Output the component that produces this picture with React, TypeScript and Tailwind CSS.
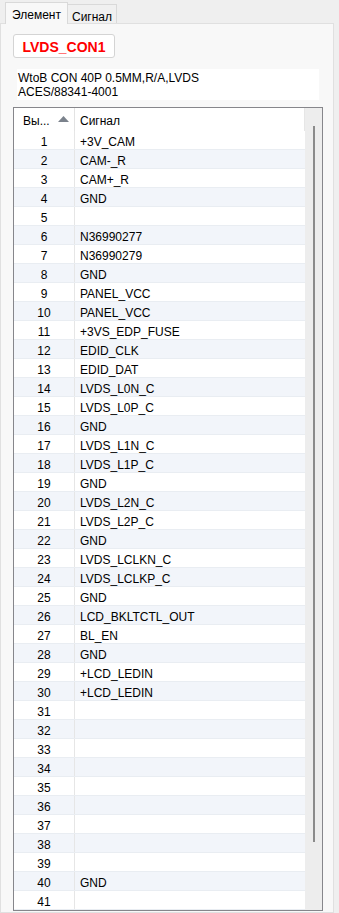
import React from "react";

const signals: Record<number, string> = {
  1: "+3V_CAM",
  2: "CAM-_R",
  3: "CAM+_R",
  4: "GND",
  6: "N36990277",
  7: "N36990279",
  8: "GND",
  9: "PANEL_VCC",
  10: "PANEL_VCC",
  11: "+3VS_EDP_FUSE",
  12: "EDID_CLK",
  13: "EDID_DAT",
  14: "LVDS_L0N_C",
  15: "LVDS_L0P_C",
  16: "GND",
  17: "LVDS_L1N_C",
  18: "LVDS_L1P_C",
  19: "GND",
  20: "LVDS_L2N_C",
  21: "LVDS_L2P_C",
  22: "GND",
  23: "LVDS_LCLKN_C",
  24: "LVDS_LCLKP_C",
  25: "GND",
  26: "LCD_BKLTCTL_OUT",
  27: "BL_EN",
  28: "GND",
  29: "+LCD_LEDIN",
  30: "+LCD_LEDIN",
  40: "GND",
};

const pins = Array.from({ length: 41 }, (_, i) => i + 1);

export default function App() {
  return (
    <div className="w-[339px] h-[913px] overflow-hidden bg-[#efefef] text-[12px] text-black font-['Liberation_Sans',Arial,sans-serif]">
      {/* Tabs */}
      <div className="flex h-[23px] items-end pl-[5px]">
        <div className="relative -mb-px z-10 flex h-[22px] w-[63px] items-start justify-center border border-b-0 border-[#d9d9d9] bg-[#f8f8f8] pt-[3px]">
          Элемент
        </div>
        <div className="flex h-[19px] w-[49px] items-start justify-center border-t border-r border-[#d9d9d9] bg-[#f0f0f0] pt-[3px]">
          Сигнал
        </div>
      </div>

      {/* Panel */}
      <div className="flex h-[890px] w-[334px] flex-col border border-[#e0e0e0] bg-[#f8f8f8] pl-[12px]">
        <div className="mt-[10px] flex h-[24px] w-[102px] items-center justify-center rounded-[3px] border border-[#d4d4d4] bg-white pt-[2px] text-[14px] font-bold text-[#ff0000]">
          LVDS_CON1
        </div>

        <div className="mt-[11px] ml-[4px] h-[31px] w-[302px] overflow-hidden bg-white pl-[1px] pt-[2px] leading-[14px]">
          WtoB CON 40P 0.5MM,R/A,LVDS
          <br />
          ACES/88341-4001
        </div>

        {/* Table */}
        <div className="mt-[7px] flex h-[804px] w-[310px] border border-[#86868b] bg-white">
          <div className="flex w-[291px] flex-col">
            <div className="flex h-[23px] shrink-0 border-r border-[#e6e6e6]">
              <div className="flex w-[61px] items-center border-r border-[#e3e3e3] pl-[9px] pt-[2px]">
                <span>Вы...</span>
                <svg width="11" height="6" viewBox="0 0 11 6" className="ml-[8px] -mt-[3px]">
                  <path d="M0 6 L5.5 0 L11 6 Z" fill="#7b828c" />
                </svg>
              </div>
              <div className="flex items-center pl-[5px] pt-[2px]">Сигнал</div>
            </div>
            {pins.map((n) => (
              <div
                key={n}
                className={`flex h-[19px] shrink-0 border-b border-[#e9edf2] ${
                  n % 2 === 0 ? "bg-[#f2f5fa]" : "bg-white"
                }`}
              >
                <div className="flex w-[61px] items-center justify-center border-r border-[#e6e6e6] pt-[3px]">
                  {n}
                </div>
                <div className="flex items-center pl-[5px] pt-[3px]">{signals[n] ?? ""}</div>
              </div>
            ))}
          </div>

          {/* Scrollbar */}
          <div className="flex w-[17px] justify-center bg-[#ededed] pt-[18px]">
            <div className="h-[716px] w-[2px] bg-[#8b8b8b]" />
          </div>
        </div>
      </div>
    </div>
  );
}
